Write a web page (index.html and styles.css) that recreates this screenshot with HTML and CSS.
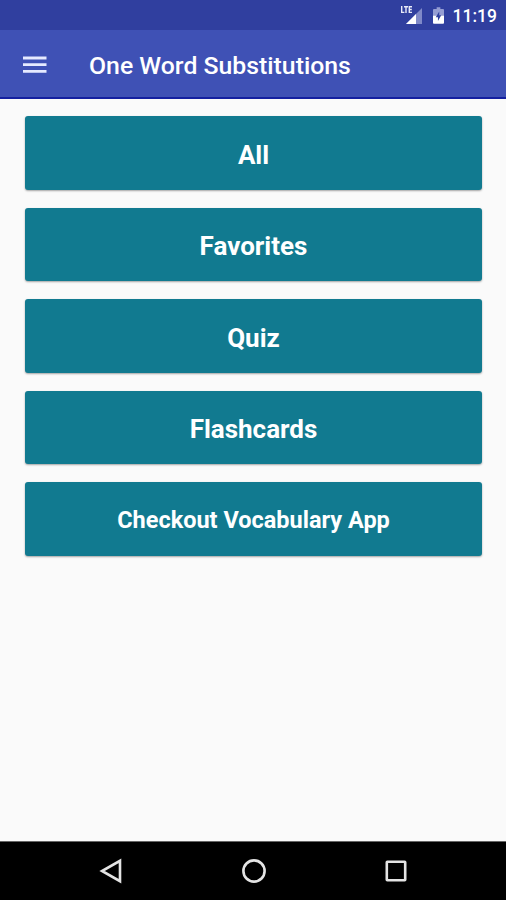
FILE: index.html
```html
<!DOCTYPE html>
<html lang="en">
<head>
  <meta charset="UTF-8" />
  <meta name="viewport" content="width=device-width, initial-scale=1.0" />
  <title>One Word Substitutions</title>
  <link rel="stylesheet" href="styles.css">
</head>
<body>
  <div class="status-bar">
    <svg class="signal" width="23" height="20" viewBox="0 0 23 20">
      <path d="M22 3V19H6Z" fill="#7f89c8" />
      <path d="M16 9V19H6Z" fill="#fff" />
      <path d="M1.7 1V7.4H4.4M4 1.7H8M6 1.7V8M12 1.7H9.3V7.4H12M9.3 4.5H11.8" fill="none" stroke="#e8eaf8" stroke-width="1.4" />
    </svg>
    <svg class="battery" width="11" height="17" viewBox="0 0 12 18">
      <path d="M1 2H4V0H8V2H11Q12 2 12 3V9H0V3Q0 2 1 2Z" fill="#959dd3" />
      <path d="M0 9H12V17Q12 18 11 18H1Q0 18 0 17Z" fill="#fff" />
      <path d="M6.8 4.5L3 11H5.4V15L9 8.8H6.8Z" fill="#303f9f" />
    </svg>
    <span class="clock">11:19</span>
  </div>

  <header class="toolbar">
    <button class="menu-btn" aria-label="Menu">
      <svg width="24" height="18" viewBox="0 0 24 18">
        <path d="M0 2H23.5M0 8.7H23.5M0 15.4H23.5" stroke="#e6eaff" stroke-width="2.8" />
      </svg>
    </button>
    <h1>One Word Substitutions</h1>
  </header>

  <main class="menu">
    <button>All</button>
    <button>Favorites</button>
    <button>Quiz</button>
    <button>Flashcards</button>
    <button class="small">Checkout Vocabulary App</button>
  </main>

  <nav class="nav-bar">
    <svg width="26" height="26" viewBox="0 0 26 26">
      <path d="M21 2.8V23.2L3 13Z" />
    </svg>
    <svg width="26" height="26" viewBox="0 0 26 26">
      <circle cx="13" cy="13" r="10.6" />
    </svg>
    <svg width="26" height="26" viewBox="0 0 26 26">
      <rect x="3.8" y="3.8" width="18.4" height="18.4" rx="0.5" />
    </svg>
  </nav>
</body>
</html>
```
FILE: styles.css
```css
* {
  box-sizing: border-box;
}

body {
  margin: 0;
  height: 100vh;
  display: flex;
  flex-direction: column;
  font-family: Roboto, sans-serif;
  background: #fafafa;
  overflow: hidden;
}

button {
  font-family: inherit;
  border: none;
  padding: 0;
  cursor: pointer;
}

.status-bar {
  height: 30px;
  display: flex;
  justify-content: flex-end;
  align-items: center;
  padding-right: 9px;
  background: #303f9f;
  color: #fff;
}

.signal {
  margin-right: 10px;
}

.battery {
  margin: 1px 9px 0 0;
}

.clock {
  font-size: 17.5px;
  font-weight: 500;
  line-height: 30px;
  padding-top: 2px;
}

.toolbar {
  height: 69px;
  display: flex;
  align-items: center;
  padding: 2px 0 0 23px;
  background: #3f51b5;
  border-bottom: 2px solid #1420a0;
}

.menu-btn {
  display: flex;
  width: 24px;
  background: none;
}

.toolbar h1 {
  margin: 0 0 0 42px;
  padding-top: 2px;
  font-size: 24.8px;
  font-weight: 500;
  line-height: 30px;
  color: #fff;
}

.menu {
  flex: 1;
  display: flex;
  flex-direction: column;
  gap: 18px;
  padding: 17px 24px 0 25px;
}

.menu button {
  height: 73.5px;
  padding-top: 4px;
  border-radius: 3px;
  background: #117a90;
  box-shadow: 0 1px 2px rgba(0, 0, 0, 0.35);
  color: #fff;
  font-size: 26px;
  font-weight: 700;
}

.menu .small {
  padding-top: 2px;
  font-size: 23.5px;
}

.nav-bar {
  height: 59px;
  display: flex;
  justify-content: center;
  align-items: center;
  gap: 116px;
  padding-left: 2px;
  background: #000;
  border-top: 1px solid #666;
}

.nav-bar svg {
  fill: none;
  stroke: #e4e4e4;
  stroke-width: 2.6;
}
```
